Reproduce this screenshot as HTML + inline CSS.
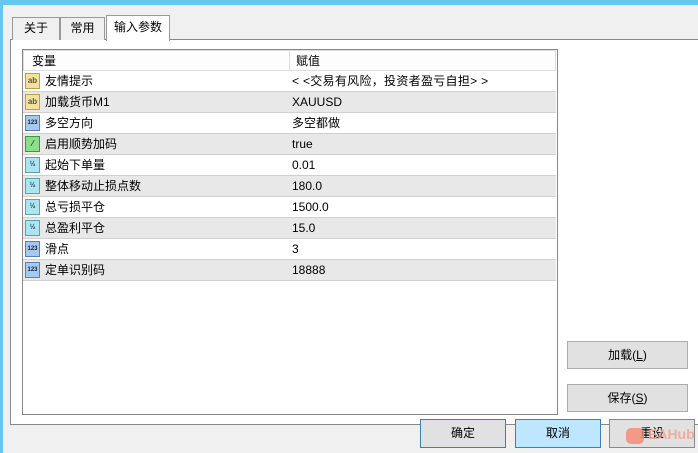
<!DOCTYPE html>
<html><head><meta charset="utf-8"><style>
*{margin:0;padding:0;box-sizing:border-box}
body{width:698px;height:453px;background:#f0f0f0;position:relative;overflow:hidden;font-family:"Liberation Sans","Noto Sans CJK SC",sans-serif;font-size:12px;color:#000}
.a{position:absolute}
.tab{position:absolute;border:1px solid #999;border-bottom:none;background:#f0f0f0;text-align:center;line-height:20px}
.btn{position:absolute;background:#e1e1e1;border:1px solid #adadad;text-align:center;font-size:12px}
.row{position:absolute;left:23px;width:533px;height:21px;border-bottom:1px solid #d0d0d0}
.row span{position:absolute;top:0;height:20px;line-height:20px;white-space:nowrap}
.ic{position:absolute;left:2px;top:2px;width:15px;height:16px;border:1px solid #999;font-size:8px;line-height:14px;text-align:center;font-weight:bold}
.ab{background:#f3e39a;border-color:#b9a24a;color:#554}
.n{background:#a9c8ee;border-color:#5b7fb0;color:#123;font-size:6px}
.h{background:#aee4ee;border-color:#5aa3b5;color:#246;font-size:7px}
.g{background:#8fdc8f;border-color:#3a9a3a;color:#050}
</style></head><body>
<div class="a" style="left:0;top:0;width:698px;height:5px;background:#63c8ea"></div>
<div class="a" style="left:0;top:0;width:3px;height:453px;background:#63c8ea"></div>
<div class="a" style="left:10px;top:39px;width:700px;height:386px;background:#fff;border:1px solid #888"></div>
<div class="tab" style="left:12px;top:17px;width:48px;height:23px">关于</div>
<div class="tab" style="left:60px;top:17px;width:45px;height:23px">常用</div>
<div class="tab" style="left:106px;top:15px;width:64px;height:26px;background:#fff;line-height:22px">输入参数</div>
<div class="a" style="left:22px;top:49px;width:536px;height:366px;border:1px solid #888;background:#fff"></div>
<div class="row" style="top:50px;background:#fdfdfd;border:1px solid #ddd"><span style="left:8px">变量</span><span style="left:272px">赋值</span></div>
<div class="a" style="left:289px;top:50px;width:1px;height:231px;background:#ddd"></div>
<div class="row" style="top:71px;background:#fff"><div class="ic ab">ab</div><span style="left:22px">友情提示</span><span style="left:269px;letter-spacing:0.3px">&lt; &lt;交易有风险，投资者盈亏自担&gt; &gt;</span></div>
<div class="row" style="top:92px;background:#e8e8e8"><div class="ic ab">ab</div><span style="left:22px">加载货币M1</span><span style="left:269px">XAUUSD</span></div>
<div class="row" style="top:113px;background:#fff"><div class="ic n">123</div><span style="left:22px">多空方向</span><span style="left:269px">多空都做</span></div>
<div class="row" style="top:134px;background:#e8e8e8"><div class="ic g">⁄</div><span style="left:22px">启用顺势加码</span><span style="left:269px">true</span></div>
<div class="row" style="top:155px;background:#fff"><div class="ic h">½</div><span style="left:22px">起始下单量</span><span style="left:269px">0.01</span></div>
<div class="row" style="top:176px;background:#e8e8e8"><div class="ic h">½</div><span style="left:22px">整体移动止损点数</span><span style="left:269px">180.0</span></div>
<div class="row" style="top:197px;background:#fff"><div class="ic h">½</div><span style="left:22px">总亏损平仓</span><span style="left:269px">1500.0</span></div>
<div class="row" style="top:218px;background:#e8e8e8"><div class="ic h">½</div><span style="left:22px">总盈利平仓</span><span style="left:269px">15.0</span></div>
<div class="row" style="top:239px;background:#fff"><div class="ic n">123</div><span style="left:22px">滑点</span><span style="left:269px">3</span></div>
<div class="row" style="top:260px;background:#e8e8e8"><div class="ic n">123</div><span style="left:22px">定单识别码</span><span style="left:269px">18888</span></div>
<div class="btn" style="left:567px;top:341px;width:121px;height:28px;line-height:26px">加载(<u>L</u>)</div>
<div class="btn" style="left:567px;top:384px;width:121px;height:28px;line-height:26px">保存(<u>S</u>)</div>
<div class="btn" style="left:420px;top:419px;width:86px;height:29px;line-height:27px;border-color:#3c7fb1">确定</div>
<div class="btn" style="left:515px;top:419px;width:86px;height:29px;line-height:27px;background:#bee6fd;border-color:#3c7fb1">取消</div>
<div class="btn" style="left:609px;top:419px;width:86px;height:29px;line-height:27px;border-color:#888">重设</div>
<div class="a" style="left:626px;top:428px;width:18px;height:16px;background:#f58a70;border-radius:5px;opacity:.8"></div>
<div class="a" style="left:648px;top:426px;color:#f4a08c;font-weight:bold;font-size:14px;opacity:.8">EAHub</div>
</body></html>
